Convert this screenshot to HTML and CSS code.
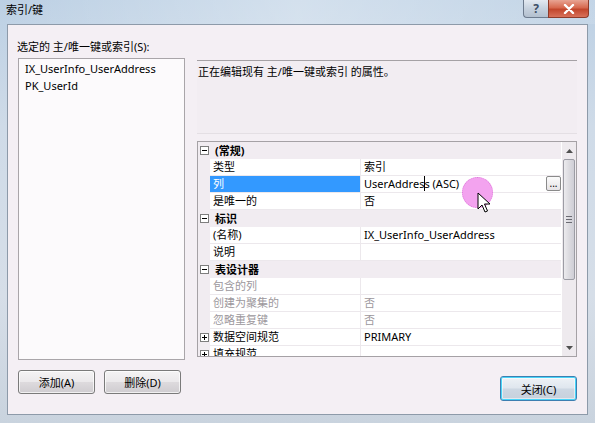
FILE: index.html
```html
<!DOCTYPE html>
<html lang="zh-CN">
<head>
  <meta charset="UTF-8">
  <title>索引/键</title>
  <link rel="stylesheet" href="styles.css">
</head>
<body>
  <div class="window">
    <div class="titlebar">
      <span class="title">索引/键</span>
      <div class="caption-buttons">
        <span class="cap help">?</span>
        <span class="cap close">
          <svg width="12" height="10" viewBox="0 0 12 10"><path d="M2 1 L10 9 M10 1 L2 9" stroke="#fff" stroke-width="2.4" stroke-linecap="round"/></svg>
        </span>
      </div>
    </div>

    <div class="client">
      <div class="left">
        <div class="label">选定的 主/唯一键或索引(S):</div>
        <ul class="listbox">
          <li>IX_UserInfo_UserAddress</li>
          <li>PK_UserId</li>
        </ul>
        <div class="btn-row">
          <button class="btn">添加(A)</button>
          <button class="btn">删除(D)</button>
        </div>
      </div>

      <div class="right">
        <div class="desc">正在编辑现有 主/唯一键或索引 的属性。</div>

        <div class="grid">
          <div class="rows">
            <div class="row cat"><span class="toggle minus"></span><span class="cat-name">(常规)</span></div>
            <div class="row"><span class="name">类型</span><span class="value">索引</span></div>
            <div class="row selected">
              <span class="name">列</span>
              <span class="value">UserAddres<span class="caret"></span>s (ASC)<span class="ellipsis">...</span></span>
            </div>
            <div class="row"><span class="name">是唯一的</span><span class="value">否</span></div>
            <div class="row cat"><span class="toggle minus"></span><span class="cat-name">标识</span></div>
            <div class="row"><span class="name">(名称)</span><span class="value">IX_UserInfo_UserAddress</span></div>
            <div class="row"><span class="name">说明</span><span class="value"></span></div>
            <div class="row cat"><span class="toggle minus"></span><span class="cat-name">表设计器</span></div>
            <div class="row disabled"><span class="name">包含的列</span><span class="value"></span></div>
            <div class="row disabled"><span class="name">创建为聚集的</span><span class="value">否</span></div>
            <div class="row disabled"><span class="name">忽略重复键</span><span class="value">否</span></div>
            <div class="row"><span class="toggle plus"></span><span class="name">数据空间规范</span><span class="value">PRIMARY</span></div>
            <div class="row"><span class="toggle plus"></span><span class="name">填充规范</span><span class="value"></span></div>
          </div>
          <div class="scrollbar">
            <div class="arrow up">
              <svg width="7" height="4" viewBox="0 0 7 4"><path d="M0 4 L3.5 0 L7 4 Z" fill="#505050"/></svg>
            </div>
            <div class="thumb"><span class="grip"></span></div>
            <div class="track"></div>
            <div class="arrow down">
              <svg width="7" height="4" viewBox="0 0 7 4"><path d="M0 0 L3.5 4 L7 0 Z" fill="#505050"/></svg>
            </div>
          </div>
        </div>

        <div class="footer">
          <button class="btn default">关闭(C)</button>
        </div>
      </div>
    </div>

    <div class="pointer-spot"></div>
    <svg class="pointer" width="14" height="22" viewBox="0 0 14 22">
      <path d="M1 1 L1 17 L5 13 L8 20 L10.5 19 L7.5 12 L13 12 Z" fill="#fff" stroke="#000" stroke-width="1" stroke-linejoin="round"/>
    </svg>
  </div>
</body>
</html>
```

FILE: styles.css
```css
* {
  margin: 0;
  padding: 0;
  box-sizing: border-box;
}
html, body {
  width: 595px;
  height: 423px;
  overflow: hidden;
  font-family: "Noto Sans", "Noto Sans CJK SC", sans-serif;
  font-size: 11px;
  color: #000;
}
.window {
  position: relative;
  width: 595px;
  height: 423px;
  display: flex;
  flex-direction: column;
  background: linear-gradient(180deg, #bcd0e4 0%, #cfdbe8 30%, #d6dee8 70%, #c9d3de 100%);
}
.titlebar {
  height: 24px;
  display: flex;
  align-items: flex-start;
  padding: 0 6px;
  background: linear-gradient(90deg, rgba(255,255,255,0) 0%, rgba(255,255,255,0.35) 50%, rgba(255,255,255,0.1) 100%);
}
.title {
  margin-top: 2px;
  line-height: 15px;
  color: #000;
}
.caption-buttons {
  margin-left: auto;
  display: flex;
}
.cap {
  height: 18px;
  display: flex;
  align-items: center;
  justify-content: center;
  border: 1px solid #6d7b8e;
  border-top: none;
}
.help {
  width: 25px;
  border-radius: 0 0 0 4px;
  border-right: none;
  background: linear-gradient(180deg, #e3e9f1 0%, #c6d1de 50%, #b3c0cf 100%);
  color: #3c4e66;
  font-weight: bold;
  font-size: 12px;
}
.close {
  width: 41px;
  border-radius: 0 0 4px 0;
  border-color: #8e3b2a;
  background: linear-gradient(180deg, #e8a493 0%, #d7694f 45%, #c2462c 55%, #d8715a 100%);
}
.client {
  flex: 1;
  margin: 0 7px 8px;
  display: flex;
  gap: 12px;
  padding: 15px 10px 0;
  background: #f4eff4;
  border: 1px solid #8d9aa9;
}
.left {
  width: 167px;
  display: flex;
  flex-direction: column;
}
.label {
  line-height: 14px;
  margin-left: -1px;
}
.listbox {
  list-style: none;
  margin-top: 4px;
  height: 302px;
  background: #fcfafc;
  border: 1px solid #a9a5a9;
  padding: 1px 0 0 6px;
}
.listbox li {
  line-height: 17px;
}
.btn-row {
  margin-top: 10px;
  display: flex;
  gap: 9px;
}
.btn {
  width: 77px;
  height: 24px;
  font-family: inherit;
  font-size: 11px;
  color: #000;
  border: 1px solid #7a7a7a;
  border-radius: 3px;
  background: linear-gradient(180deg, #f4f3f4 0%, #ebe9eb 48%, #dddadd 52%, #cfccd0 100%);
  box-shadow: inset 0 0 0 1px rgba(255,255,255,0.7);
}
.right {
  flex: 1;
  display: flex;
  flex-direction: column;
  padding-top: 20px;
}
.desc {
  height: 74px;
  padding: 4px 1px;
  line-height: 14px;
  background: #f2edf2;
  border-top: 1px solid #a5a1a5;
  border-bottom: 1px solid #e4dfe4;
}
.grid {
  margin-top: 7px;
  height: 216px;
  display: flex;
  border: 1px solid #a5a1a5;
  background: #f1ecf1;
  overflow: hidden;
}
.rows {
  flex: 1;
  display: flex;
  flex-direction: column;
}
.row {
  height: 17px;
  flex-shrink: 0;
  display: flex;
  align-items: stretch;
  position: relative;
  padding-left: 12px;
}
.row .name {
  width: 151px;
  padding-left: 3px;
  line-height: 16px;
  background: #fff;
  border-right: 1px solid #ece8ec;
  border-bottom: 1px solid #ece8ec;
  white-space: nowrap;
}
.row .value {
  flex: 1;
  padding-left: 3px;
  line-height: 16px;
  background: #fff;
  border-bottom: 1px solid #ece8ec;
  position: relative;
  white-space: nowrap;
}
.row.selected .name {
  background: #3399ff;
  color: #fff;
}
.row.disabled {
  color: #9c979c;
}
.row.cat {
  padding-left: 0;
  align-items: center;
}
.cat-name {
  font-weight: bold;
  margin-left: 6px;
  line-height: 16px;
}
.toggle {
  width: 9px;
  height: 9px;
  border: 1px solid #7e7e7e;
  background: #fff;
  margin-left: 2px;
  position: relative;
  flex-shrink: 0;
}
.row:not(.cat) .toggle {
  position: absolute;
  left: 0;
  top: 4px;
}
.toggle::before {
  content: "";
  position: absolute;
  left: 1px;
  top: 3px;
  width: 5px;
  height: 1px;
  background: #000;
}
.toggle.plus::after {
  content: "";
  position: absolute;
  left: 3px;
  top: 1px;
  width: 1px;
  height: 5px;
  background: #000;
}
.caret {
  display: inline-block;
  width: 1px;
  height: 15px;
  background: #000;
  vertical-align: -3px;
  margin: 0 -1px 0 0;
}
.ellipsis {
  position: absolute;
  right: 0;
  top: 0;
  width: 15px;
  height: 15px;
  line-height: 12px;
  text-align: center;
  font-size: 10px;
  border: 1px solid #8a8a8a;
  border-radius: 2px;
  background: linear-gradient(180deg, #fbfbfb, #e6e3e6);
}
.scrollbar {
  width: 15px;
  display: flex;
  flex-direction: column;
  background: #eeeaee;
  border-left: 1px solid #fff;
}
.arrow {
  height: 17px;
  display: flex;
  align-items: center;
  justify-content: center;
}
.thumb {
  height: 121px;
  margin: 0 1px;
  border: 1px solid #9c9ca4;
  border-radius: 2px;
  background: linear-gradient(90deg, #ecebee 0%, #dcdbe0 50%, #cfced6 100%);
  display: flex;
  align-items: center;
  justify-content: center;
}
.grip {
  width: 6px;
  height: 7px;
  border-top: 1px solid #6b6b73;
  border-bottom: 1px solid #6b6b73;
  position: relative;
}
.grip::after {
  content: "";
  position: absolute;
  left: 0;
  right: 0;
  top: 2px;
  height: 1px;
  background: #6b6b73;
}
.track {
  flex: 1;
}
.footer {
  margin-top: 19px;
  display: flex;
  justify-content: flex-end;
}
.btn.default {
  height: 25px;
  border: 1px solid #3c7fb1;
  box-shadow: inset 0 0 0 1px #48d4f8, inset 0 0 0 2px rgba(255,255,255,0.5);
  background: linear-gradient(180deg, #eef2f6 0%, #dfe6ee 48%, #cdd7e2 52%, #c6d0dc 100%);
}
.pointer-spot {
  position: absolute;
  left: 462px;
  top: 177px;
  width: 31px;
  height: 31px;
  border-radius: 50%;
  background: #f3a3ef;
  border: 1px dotted #e07fdc;
}
.pointer {
  position: absolute;
  left: 477px;
  top: 192px;
}
```
